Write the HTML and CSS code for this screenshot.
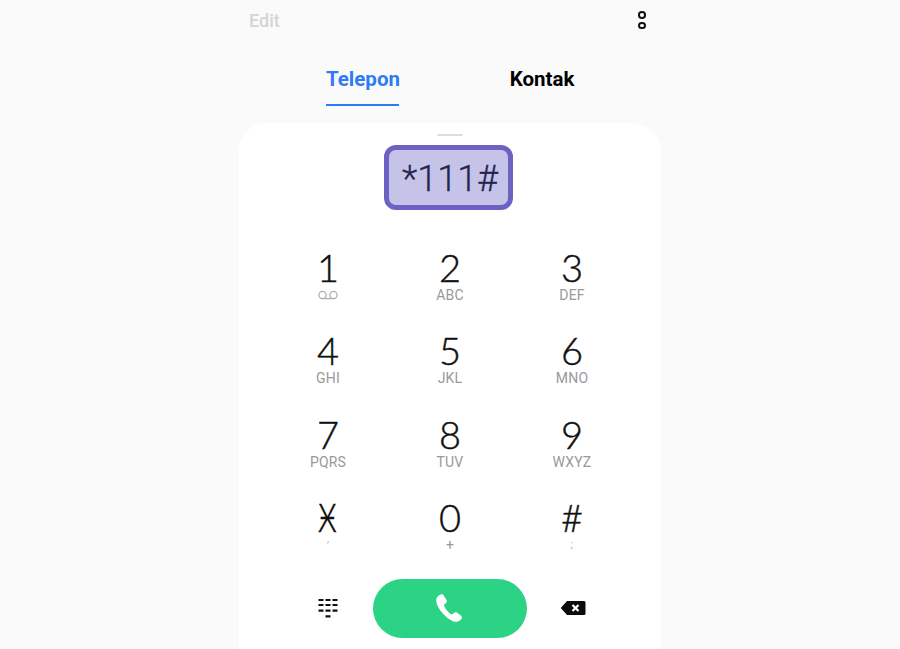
FILE: index.html
```html
<!DOCTYPE html>
<html lang="id">
<head>
<meta charset="utf-8">
<title>Telepon</title>
<link rel="stylesheet" href="styles.css">
</head>
<body>
<main class="phone">
  <header class="topbar">
    <span class="edit">Edit</span>
    <span class="more" aria-label="Lainnya"><i></i><i></i></span>
  </header>
  <nav class="tabs">
    <a class="tab active">Telepon</a>
    <a class="tab">Kontak</a>
  </nav>
  <section class="sheet">
    <div class="handle"></div>
    <div class="number"><span>*111#</span></div>
    <div class="keys">
      <div class="key"><b>1</b><svg class="vm" width="22" height="10" viewBox="0 0 22 10"><circle cx="5.500" cy="5" r="3.600"/><circle cx="16.500" cy="5" r="3.600"/><path d="M5.500 8.600h11"/></svg></div>
      <div class="key"><b>2</b><small>ABC</small></div>
      <div class="key"><b>3</b><small>DEF</small></div>
      <div class="key"><b>4</b><small>GHI</small></div>
      <div class="key"><b>5</b><small>JKL</small></div>
      <div class="key"><b>6</b><small>MNO</small></div>
      <div class="key"><b>7</b><small>PQRS</small></div>
      <div class="key"><b>8</b><small>TUV</small></div>
      <div class="key"><b>9</b><small>WXYZ</small></div>
      <div class="key"><b class="star" aria-label="*">Ӿ</b><small class="tiny comma">,</small></div>
      <div class="key"><b>0</b><small>+</small></div>
      <div class="key"><b>#</b><small class="tiny">;</small></div>
    </div>
    <div class="actions">
      <svg class="pad" width="20" height="20" viewBox="0 0 20 20"><path d="M.5 2h5M7.500 2h5M14.500 2h5M.5 7h5M7.500 7h5M14.500 7h5M.5 12.700h5M7.500 12.700h5M14.500 12.700h5M7.500 18.300h5"/></svg>
      <button class="call" aria-label="Panggil"><svg width="32" height="32" viewBox="0 0 30 30"><path d="M7.800 2.200C5.800 2.700 3.400 4.500 3.100 7c-.4 3.300 1.800 7.800 5 11.800 3.400 4.200 7.900 8.100 12.300 9.100 2.700.6 5.400-1 6.500-3 .6-1.100.3-2-.6-2.700l-4-2.900c-.9-.6-1.700-.5-2.500.1l-1.300 1.200c-.5.400-1 .5-1.500.2-1.500-.9-2.800-2.100-3.900-3.400-1.200-1.400-2.100-2.900-2.700-4.500-.2-.5-.1-1.100.4-1.500l1.400-1.100c.8-.7 1-1.500.6-2.500L10.100 3.400c-.4-1-1.300-1.500-2.300-1.200z"/></svg></button>
      <svg class="del" width="26" height="16" viewBox="0 0 26 16"><path class="body" d="M7 1h17a1.500 1.500 0 0 1 1.500 1.500v11A1.500 1.500 0 0 1 24 15H7L.8 8z"/><path class="x" d="M12.500 5l6 6M18.500 5l-6 6"/></svg>
    </div>
  </section>
</main>
</body>
</html>
```
FILE: styles.css
```css
* { box-sizing: border-box; }
html, body { margin: 0; height: 100%; background: #fafafa; }
body { display: flex; justify-content: center; overflow: hidden; font-family: Roboto, "Liberation Sans", sans-serif; }
.phone { width: 422px; height: 649px; display: flex; flex-direction: column; overflow: hidden; }
.topbar { height: 41px; padding: 0 15.500px 0 10px; display: flex; justify-content: space-between; align-items: center; }
.edit { font-size: 18px; font-weight: 500; line-height: 39px; margin-bottom: 1px; color: #d4d4d4; }
.more { display: flex; flex-direction: column; gap: 3px; margin-bottom: 1px; }
.more i { display: block; width: 7.500px; height: 7.500px; border: 2px solid #111; border-radius: 50%; }
.tabs { height: 82px; display: flex; padding-left: 87px; }
.tab { width: 73px; height: 65px; padding-top: 25px; font-size: 20.500px; font-weight: 700; line-height: 26px; text-align: center; color: #000; white-space: nowrap; }
.tab + .tab { margin-left: 110px; width: 66px; }
.tab.active { color: #2f7bf6; border-bottom: 2px solid #2f7bf6; }
.sheet { flex: 1; background: #fff; border-radius: 28px 28px 0 0; display: flex; flex-direction: column; align-items: center; padding-top: 11px; }
.handle { width: 26px; height: 2px; background: #dcdcdc; border-radius: 1px; }
.number { margin: 9px 3px 0 0; width: 129.500px; height: 65px; border: 5px solid #6b62c4; border-radius: 12px; background: #c5c3e8; display: flex; align-items: center; justify-content: center; }
.number span { font-size: 36px; font-weight: 300; line-height: 55px; margin: 3px 0 0 3px; color: #25234f; -webkit-text-stroke: .3px #25234f; }
.keys { margin-top: 37px; width: 366px; display: grid; grid-template-columns: repeat(3, 122px); grid-template-rows: repeat(3, 83.300px) 76px; }
.key { display: flex; flex-direction: column; align-items: center; }
.key b { font-family: Lato, sans-serif; font-size: 38px; font-weight: 300; line-height: 40px; color: #111; -webkit-text-stroke: .45px #111; }
.key small { font-size: 14px; line-height: 16px; color: #999; letter-spacing: .2px; }
.key small.tiny { font-size: 10px; color: #aaa; }
.key small.comma { margin-top: -6px; }
.key b.star { font-family: "Noto Sans", "DejaVu Sans", sans-serif; font-size: 38px; transform: translateX(-1px) scaleX(.85); -webkit-text-stroke: .3px #111; }
.vm { margin: 3px 0; fill: none; stroke: #b0b0b0; stroke-width: 1.300; }
.actions { margin-top: 6px; width: 366px; display: grid; grid-template-columns: repeat(3, 122px); align-items: center; justify-items: center; }
.pad { fill: none; stroke: #111; stroke-width: 2.200; }
.call { width: 154px; height: 59px; border: 0; border-radius: 30px; background: #2dd385; display: flex; align-items: center; justify-content: center; padding: 0 2px 0 0; }
.call svg { fill: #fff; }
.del { margin-left: 2px; }
.del .body { fill: #0c0c0c; }
.del .x { stroke: #fff; stroke-width: 2.200; fill: none; }
```
